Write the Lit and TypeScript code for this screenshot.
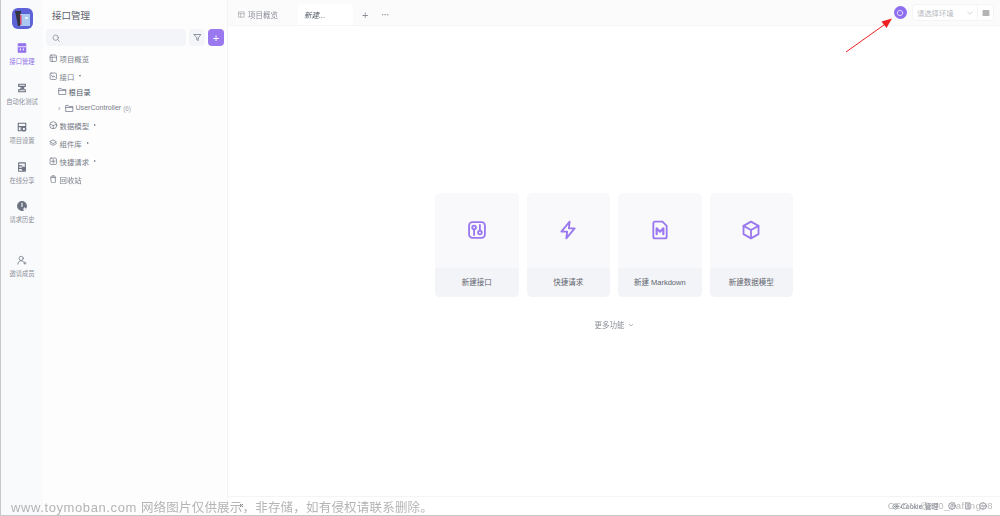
import { LitElement, html, css, svg } from "lit";
import { customElement } from "lit/decorators.js";

const ic = (body: unknown, size = 9, w = 1.6, color = "#6b7280") => html`<svg width=${size} height=${size} viewBox="0 0 24 24" fill="none" stroke=${color} stroke-width=${w} stroke-linecap="round" stroke-linejoin="round">${body}</svg>`;
const folder = svg`<path d="M2 20V4h7l2 3h11v13z"/><path d="M2 10h20"/>`;

const rail = [
  { t: "接口管理", active: true, i: svg`<path d="M3 2h18v20H3z" fill="#9373ee" stroke="#9373ee"/><path d="M3 9h18" stroke="#fff" stroke-width="2"/><path d="M8 14v3M15 14v3" stroke="#fff" stroke-width="2.500"/>` },
  { t: "自动化测试", i: svg`<path d="M4 3h16v5H4zM4 16h16v5H4z" /><path d="M7 8c0 3 10 2 10 4s-10 1-10 4" />` },
  { t: "项目设置", i: svg`<path d="M3 3h18v8H3zM3 11h7v10H3z" /><circle cx="16.500" cy="16.500" r="4.500" stroke-width="3.500"/>` },
  { t: "在线分享", i: svg`<path d="M4 2h16v20H4z"/><path d="M4 9h8M4 15h8" stroke-width="3"/><circle cx="16" cy="16" r="4" fill="#6b7280"/>` },
  { t: "请求历史", i: svg`<circle cx="12" cy="12" r="10.500" fill="#6b7280"/><path d="M12 5v8" stroke="#fff" stroke-width="2.500"/><path d="M18.500 16v6M15.500 19h6" stroke="#fff" stroke-width="2.500"/>` },
];

const tree = [
  { t: "项目概览", i: svg`<rect x="3" y="3" width="18" height="18" rx="3"/><path d="M3 9h18M9 9v12"/>` },
  { t: "接口", caret: true, i: svg`<rect x="3" y="3" width="18" height="18" rx="3"/><path d="M7 9l4 6 2-4 4 3"/>` },
  { t: "根目录", sub: 1, i: folder, strong: true },
  { t: "UserController", sub: 2, i: folder, count: "(6)", chevron: true },
  { t: "数据模型", caret: true, i: svg`<circle cx="12" cy="12" r="10"/><path d="M4 9l8 4 8-4M12 13v9"/>` },
  { t: "组件库", caret: true, i: svg`<path d="M12 3l9 5-9 5-9-5z"/><path d="M3 13l9 5 9-5"/>` },
  { t: "快捷请求", caret: true, i: svg`<rect x="3" y="3" width="18" height="18" rx="3"/><path d="M12 7v10M7 12h10"/>` },
  { t: "回收站", i: svg`<path d="M6 6h12v14a2 2 0 0 1-2 2H8a2 2 0 0 1-2-2zM9 2h6M5 6h14"/>` },
];

const cards = [
  { t: "新建接口", i: svg`<rect x="2.500" y="2.500" width="19" height="19" rx="4"/><circle cx="8.500" cy="9" r="2.200"/><path d="M8.500 11.200V18M15.500 6v6.800"/><circle cx="15.500" cy="15" r="2.200"/>` },
  { t: "快捷请求", i: svg`<path d="M14 2L4 14h7l-1 8 10-12h-7z"/>` },
  { t: "新建 Markdown", i: svg`<path d="M4 4a2 2 0 0 1 2-2h9l5 5v13a2 2 0 0 1-2 2H6a2 2 0 0 1-2-2z"/><path d="M8 17V10l4 4 4-4v7" stroke-width="2.600"/>` },
  { t: "新建数据模型", i: svg`<path d="M12 2l9 5v10l-9 5-9-5V7z"/><path d="M3 7l9 5 9-5M12 12v10"/>` },
];

@customElement("app-root")
export class AppRoot extends LitElement {
  static styles = css`
    :host {
      display: block;
      width: 1000px;
      height: 516px;
      position: relative;
      overflow: hidden;
      background: #fff;
      font-family: "Liberation Sans", "Noto Sans CJK SC", sans-serif;
      color: #6b7280;
      box-sizing: border-box;
      border-left: 1px solid #c8c8c8;
      border-bottom: 1px solid #c8c8c8;
    }
    * { box-sizing: border-box; }
    .app { display: flex; height: 100%; filter: blur(0.3px); }
    .rail {
      width: 42px;
      flex: none;
      background: #f9fafc;
      display: flex;
      flex-direction: column;
      align-items: center;
      padding-top: 8px;
    }
    .logo {
      width: 21px;
      height: 21px;
      border-radius: 6px;
      background: #5d63d6;
      display: flex;
      align-items: center;
      justify-content: center;
      margin-bottom: 14px;
    }
    .rail-item {
      height: 39.500px;
      width: 100%;
      display: flex;
      flex-direction: column;
      align-items: center;
      gap: 4px;
      font-size: 6.300px;
      line-height: 9px;
      color: #8b8f98;
      white-space: nowrap;
    }
    .rail-item.active { color: #8f6fe8; }
    .rail-item.invite { margin-top: 14.500px; }
    .side {
      width: 185px;
      flex: none;
      background: #fdfdfe;
      border-right: 1px solid #f3f4f6;
      padding: 0 3px 0 3px;
    }
    .side-title {
      height: 29px;
      padding: 0 0 0 6px;
      display: flex;
      align-items: center;
      font-size: 9.500px;
      color: #5b606a;
    }
    .search-row { display: flex; gap: 3px; height: 17px; margin-bottom: 3px; }
    .search {
      flex: 1;
      background: #f4f5f8;
      border-radius: 4px;
      display: flex;
      align-items: center;
      padding-left: 6px;
    }
    .btn {
      width: 16px;
      height: 17px;
      border-radius: 4px;
      background: #f4f5f8;
      display: flex;
      align-items: center;
      justify-content: center;
    }
    .btn.add { background: #9a78ef; color: #fff; font-size: 11px; }
    .node {
      height: 18px;
      display: flex;
      align-items: center;
      gap: 2px;
      font-size: 7.400px;
      color: #777c86;
      padding-left: 3px;
      white-space: nowrap;
    }
    .node.sub1 { padding-left: 12px; height: 14px; margin-top: -1px; }
    .node.sub2 { padding: 2px 0 0 12px; height: 18px; }
    .node.strong { color: #4b5563; }
    .node.sub2 span.label { font-size: 7.100px; }
    .node .count { color: #a2a6ae; font-size: 6.300px; }
    .caret {
      width: 0;
      height: 0;
      border-left: 1.500px solid transparent;
      border-right: 1.500px solid transparent;
      border-top: 2px solid #6b7280;
      margin-left: 3px;
    }
    .caret.side-caret {
      border-top: 1.500px solid transparent;
      border-bottom: 1.500px solid transparent;
      border-left: 2px solid #6b7280;
      border-right: 0;
    }
    .chev { font-size: 7px; color: #8b8f98; width: 5px; margin-right: 0; line-height: 1; }
    .main { flex: 1; display: flex; flex-direction: column; min-width: 0; }
    .top {
      height: 26px;
      flex: none;
      background: #fbfbfb;
      display: flex;
      align-items: flex-end;
      padding-left: 4px;
      border-bottom: 1px solid #f5f5f6;
    }
    .tab {
      height: 21px;
      display: flex;
      align-items: center;
      gap: 3px;
      padding: 0 6px;
      font-size: 7.500px;
      color: #8b8f98;
      width: 66px;
    }
    .tab.on {
      background: #fff;
      border-radius: 4px 4px 0 0;
      width: 55px;
      color: #4b5563;
      font-style: italic;
      padding-left: 6px;
    }
    .tools {
      height: 21px;
      display: flex;
      align-items: center;
      gap: 13px;
      padding-left: 9px;
      font-size: 11px;
      color: #8b8f98;
    }
    .dots { font-size: 8px; font-weight: bold; letter-spacing: 0; }
    .top-right {
      margin-left: auto;
      height: 25px;
      display: flex;
      align-items: center;
      padding-right: 6px;
    }
    .env-dot {
      width: 13px;
      height: 13px;
      border-radius: 50%;
      background: #8e6ff0;
      display: flex;
      align-items: center;
      justify-content: center;
      margin-right: 5.500px;
    }
    .env {
      width: 66px;
      height: 17px;
      background: #fff;
      border: 1px solid #f3f4f6;
      border-radius: 4px 0 0 4px;
      display: flex;
      align-items: center;
      justify-content: space-between;
      padding: 0 3px 0 4px;
      font-size: 7.300px;
      color: #b7bac1;
    }
    .menu {
      width: 16px;
      height: 17px;
      background: #fff;
      border: 1px solid #f3f4f6;
      border-left: 0;
      border-radius: 0 4px 4px 0;
      display: flex;
      align-items: center;
      justify-content: center;
    }
    .content {
      flex: 1;
      display: flex;
      flex-direction: column;
      align-items: center;
      padding-top: 167px;
    }
    .cards { display: flex; gap: 8px; }
    .card {
      width: 83.500px;
      height: 104px;
      border-radius: 5px;
      overflow: hidden;
      background: #f9f9fc;
      display: flex;
      flex-direction: column;
    }
    .card-top { flex: 1; display: flex; align-items: center; justify-content: center; padding-bottom: 1px; }
    .card-label {
      height: 29px;
      padding-bottom: 2px;
      background: #f3f4f8;
      display: flex;
      align-items: center;
      justify-content: center;
      font-size: 7.500px;
      color: #5f646e;
    }
    .more {
      margin-top: 22px;
      display: flex;
      align-items: center;
      gap: 3px;
      font-size: 7.500px;
      color: #8b8f98;
    }
    .foot {
      height: 19px;
      flex: none;
      border-top: 1px solid #f4f4f5;
      display: flex;
      align-items: center;
      justify-content: flex-end;
      gap: 7.500px;
      padding-right: 13px;
      font-size: 7px;
      color: #6b7280;
    }
    .foot-cookie { display: flex; align-items: center; gap: 2px; margin-right: 2px; }
    .arrow { position: absolute; left: 0; top: 0; pointer-events: none; }
    .mark {
      position: absolute;
      left: 10px;
      top: 497px;
      line-height: 20px;
      color: #b4b4b4;
      white-space: nowrap;
    }
    .mark-url { font-size: 13px; letter-spacing: 0.600px; margin-right: 4px; }
    .mark-note { font-size: 12.500px; letter-spacing: 0.200px; }
    .csdn {
      position: absolute;
      right: 7px;
      top: 499px;
      font-size: 9.500px;
      line-height: 14px;
      letter-spacing: 0.500px;
      color: #b8b8b8;
      white-space: nowrap;
    }
    .collapse { position: absolute; left: 238px; top: 501px; font-size: 8px; line-height: 10px; color: #555; }
  `;

  render() {
    return html`
      <div class="app">
        <nav class="rail">
          <div class="logo">
            <svg width="17" height="17" viewBox="0 0 17 17"><path d="M1 1h6v15H4z" fill="#33343f"/><rect x="6" y="4" width="10" height="12" fill="#a9c8f2"/><rect x="6" y="5" width="1.500" height="10" fill="#e0436b"/><rect x="11" y="7" width="3" height="2" fill="#e6effc"/></svg>
          </div>
          ${rail.map((r) => html`
            <div class="rail-item ${r.active ? "active" : ""}">
              ${ic(r.i, 10, 2.600)}
              <span>${r.t}</span>
            </div>`)}
          <div class="rail-item invite">
            ${ic(svg`<circle cx="10" cy="8" r="5"/><path d="M2 22c0-5 3-8 8-8s6 2 7 4M19 17v5M16.500 19.500h5"/>`, 10, 1.800)}
            <span>邀请成员</span>
          </div>
        </nav>
        <aside class="side">
          <div class="side-title">接口管理</div>
          <div class="search-row">
            <div class="search">${ic(svg`<circle cx="11" cy="11" r="8"/><path d="M17 17l5 5"/>`, 8, 1.800)}</div>
            <div class="btn">${ic(svg`<path d="M3 4h18l-7 9v7l-4-2v-5z"/>`, 9, 2)}</div>
            <div class="btn add">+</div>
          </div>
          ${tree.map((n) => html`
            <div class="node ${n.sub ? `sub${n.sub}` : ""} ${n.strong ? "strong" : ""}">
              ${n.chevron ? html`<span class="chev">›</span>` : ""}
              ${ic(n.i, 8.500, 2)}
              <span class="label">${n.t}</span>
              ${n.count ? html`<span class="count">${n.count}</span>` : ""}
              ${n.caret ? html`<span class="caret ${n.t === "接口" ? "" : "side-caret"}"></span>` : ""}
            </div>`)}
        </aside>
        <main class="main">
          <div class="top">
            <div class="tab">${ic(svg`<path d="M3 3h18v18H3zM3 9h18M9 9v12"/>`, 7, 1.800, "#8b8f98")}<span>项目概览</span></div>
            <div class="tab on"><span>新建...</span></div>
            <div class="tools"><span>+</span><span class="dots">···</span></div>
            <div class="top-right">
              <div class="env-dot">${ic(svg`<circle cx="12" cy="12" r="8"/>`, 8, 3, "#d9cffb")}</div>
              <div class="env"><span>请选择环境</span>${ic(svg`<path d="M5 9l7 7 7-7"/>`, 8, 1.800, "#b7bac1")}</div>
              <div class="menu">${ic(svg`<path d="M3 6h18M3 12h18M3 18h18"/>`, 8, 2.600, "#555")}</div>
            </div>
          </div>
          <div class="content">
            <div class="cards">
              ${cards.map((c) => html`
                <div class="card">
                  <div class="card-top">${ic(c.i, 20, 2.200, "#9a78ef")}</div>
                  <div class="card-label">${c.t}</div>
                </div>`)}
            </div>
            <div class="more"><span>更多功能</span>${ic(svg`<path d="M5 9l7 7 7-7"/>`, 6, 2.500, "#8b8f98")}</div>
          </div>
          <div class="foot">
            <span class="foot-cookie">${ic(svg`<circle cx="12" cy="12" r="9"/><circle cx="12" cy="12" r="3"/>`, 7, 2.500)}<span>Cookie 管理</span></span>
            ${ic(svg`<circle cx="12" cy="12" r="10"/><path d="M9 9a3 3 0 1 1 3 4v2"/>`, 8, 2.200)}
            ${ic(svg`<path d="M6 3h12v18H6z"/><path d="M12 7v10"/>`, 8, 2.200)}
            ${ic(svg`<circle cx="12" cy="12" r="10"/><path d="M7 12h10"/>`, 8, 2.200)}
          </div>
        </main>
      </div>
      <svg class="arrow" width="1000" height="516" viewBox="0 0 1000 516">
        <path d="M845 52L885 23.500" stroke="#f02020" stroke-width="1"/>
        <path d="M891 18.500L880.500 21.500L885.500 28z" fill="#f02020"/>
      </svg>
      <div class="collapse">«</div>
      <div class="mark"><span class="mark-url">www.toymoban.com</span><span class="mark-note">网络图片仅供展示，非存储，如有侵权请联系删除。</span></div>
      <div class="csdn">CSDN @m0_dafling28</div>
    `;
  }
}
